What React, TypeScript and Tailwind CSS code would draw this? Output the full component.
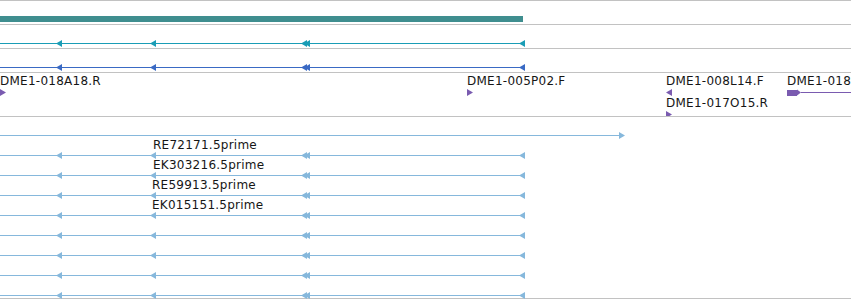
import React from "react";

const TEAL = "#1a9db6";
const BLUE = "#3a6ac4";
const LBLUE = "#86b8dc";
const PURPLE = "#7a5bb0";

function tri(x: number, dir: "l" | "r") {
  return dir === "l"
    ? `${x},3.5 ${x + 6},0 ${x + 6},7`
    : `${x + 6},3.5 ${x},0 ${x},7`;
}

function GeneLine({ color }: { color: string }) {
  return (
    <svg className="block shrink-0 overflow-visible" width={851} height={7} viewBox="0 0 851 7">
      <rect x={0} y={3} width={523} height={1} fill={color} />
      <polygon points={tri(56, "l")} fill={color} />
      <polygon points={tri(150, "l")} fill={color} />
      <polygon points={tri(301, "l")} fill={color} />
      <polygon points={tri(304, "l")} fill={color} />
      <polygon points={tri(519, "l")} fill={color} />
      <rect x={523} y={1} width={1} height={5} fill={color} />
    </svg>
  );
}

function ForwardLine({ color }: { color: string }) {
  return (
    <svg className="block shrink-0 overflow-visible" width={851} height={7} viewBox="0 0 851 7">
      <rect x={0} y={3} width={621} height={1} fill={color} />
      <polygon points={tri(619, "r")} fill={color} />
    </svg>
  );
}

function Marker({ dir }: { dir: "l" | "r" }) {
  return (
    <svg className="block shrink-0" width={6} height={7} viewBox="0 0 6 7">
      <polygon points={tri(0, dir)} fill={PURPLE} />
    </svg>
  );
}

const text =
  "whitespace-nowrap text-[12px] leading-[14px] tracking-[0.25px] text-[#161616] font-['DejaVu_Sans',sans-serif]";

type Row = { label?: string; indent?: string; forward?: boolean };

const rows: Row[] = [
  { forward: true },
  { label: "RE72171.5prime", indent: "pl-[153px]" },
  { label: "EK303216.5prime", indent: "pl-[153px]" },
  { label: "RE59913.5prime", indent: "pl-[152px]" },
  { label: "EK015151.5prime", indent: "pl-[152px]" },
  {},
  {},
  {},
  {},
];

export default function App() {
  return (
    <div className="w-[851px] h-[300px] overflow-hidden bg-white">
      <div className="flex flex-col border-t border-[#c2c2c2]">
        {/* Track 1: teal bar */}
        <div className="h-[24px] pt-[15px] border-b border-[#c2c2c2]">
          <div className="h-[6px] w-[523px] bg-[#3f8e8f]" />
        </div>
        {/* Track 2 */}
        <div className="h-[24px] pt-[15px] border-b border-[#c2c2c2]">
          <GeneLine color={TEAL} />
        </div>
        {/* Track 3 */}
        <div className="h-[24px] pt-[15px] border-b border-[#c2c2c2]">
          <GeneLine color={BLUE} />
        </div>
        {/* Track 4: clone ends */}
        <div className="h-[44px] pt-px border-b border-[#c2c2c2] flex overflow-hidden">
          <div className="w-[467px] flex flex-col gap-px">
            <div className={text}>DME1-018A18.R</div>
            <Marker dir="r" />
          </div>
          <div className="w-[199px] flex flex-col gap-px">
            <div className={text}>DME1-005P02.F</div>
            <Marker dir="r" />
          </div>
          <div className="w-[121px] flex flex-col gap-px">
            <div className={text}>DME1-008L14.F</div>
            <Marker dir="l" />
            <div className={`${text} -mt-[1px]`}>DME1-017O15.R</div>
            <Marker dir="r" />
          </div>
          <div className="flex-1 flex flex-col gap-px min-w-0">
            <div className={text}>DME1-018</div>
            <div className="flex items-center h-[7px]">
              <div className="h-[6px] w-[10px] bg-[#7a5bb0]" />
              <svg className="block shrink-0" width={4} height={7} viewBox="0 0 4 7">
                <polygon points="0,0.5 4,3.5 0,6.5" fill={PURPLE} />
              </svg>
              <div className="h-px flex-1 bg-[#7a5bb0]" />
            </div>
          </div>
        </div>
        {/* Track 5: ESTs */}
        <div className="h-[182px] border-b border-[#c2c2c2] flex flex-col">
          {rows.map((r, i) => (
            <div key={i} className="h-[20px] shrink-0 flex flex-col">
              <div className={`h-[15px] pt-px shrink-0 ${r.indent ?? ""}`}>
                {r.label && <div className={text}>{r.label}</div>}
              </div>
              {r.forward ? <ForwardLine color={LBLUE} /> : <GeneLine color={LBLUE} />}
            </div>
          ))}
        </div>
      </div>
    </div>
  );
}
